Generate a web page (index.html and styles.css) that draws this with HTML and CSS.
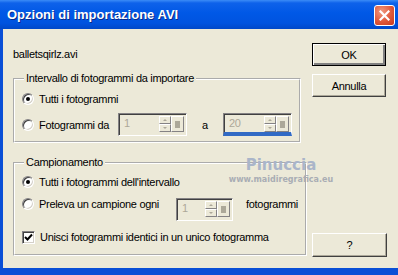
FILE: index.html
```html
<!DOCTYPE html>
<html lang="it">
<head>
<meta charset="utf-8" />
<title>Opzioni di importazione AVI</title>
<link rel="stylesheet" href="styles.css">
</head>
<body>
<div class="window">
	<div class="titlebar">
		<span class="title">Opzioni di importazione AVI</span>
		<span class="close">
			<svg width="11" height="11" viewBox="0 0 11 11"><path d="M1.5 1.5 L9.5 9.5 M9.5 1.5 L1.5 9.5" stroke="#fff" stroke-width="2.2" stroke-linecap="square"/></svg>
		</span>
	</div>
	<div class="client">
		<div class="main">
			<p class="file">balletsqirlz.avi</p>

			<fieldset class="group range">
				<legend>Intervallo di fotogrammi da importare</legend>
				<div class="row first"><span class="radio on"></span>Tutti i fotogrammi</div>
				<div class="row spinrow">
					<span class="radio"></span><span class="lbl from">Fotogrammi da</span>
					<span class="spin"><span class="val">1</span><span class="arrows"><i class="up"></i><i class="down"></i></span><span class="sq"><b></b></span></span>
					<span class="lbl to">a</span>
					<span class="spin focus"><span class="val">20</span><span class="arrows"><i class="up"></i><i class="down"></i></span><span class="sq"><b></b></span></span>
				</div>
			</fieldset>

			<fieldset class="group sample">
				<legend>Campionamento</legend>
				<div class="row first"><span class="radio on"></span>Tutti i fotogrammi dell'intervallo</div>
				<div class="row every">
					<span class="radio"></span><span class="lbl ogni">Preleva un campione ogni</span>
					<span class="spin small"><span class="val">1</span><span class="arrows"><i class="up"></i><i class="down"></i></span><span class="sq"><b></b></span></span>
					<span class="lbl unit">fotogrammi</span>
				</div>
				<div class="row check">
					<span class="box"><svg width="9" height="9" viewBox="0 0 9 9"><path d="M1 4 L3.5 6.5 L8 1.5" fill="none" stroke="#000" stroke-width="2"/></svg></span>
					Unisci fotogrammi identici in un unico fotogramma
				</div>
			</fieldset>
		</div>

		<div class="side">
			<span class="btn default">OK</span>
			<span class="btn">Annulla</span>
			<span class="btn help">?</span>
		</div>
	</div>

	<div class="mark">
		<span class="mark-name">Pinuccia</span>
		<span class="mark-url">www.maidiregrafica.eu</span>
	</div>
</div>
</body>
</html>
```

FILE: styles.css
```css
body {
	margin: 0;
	font: 11px "Liberation Sans", Arial, sans-serif;
	letter-spacing: -0.3px;
	color: #000;
}
.window {
	position: relative;
	width: 398px;
	height: 275px;
	overflow: hidden;
	display: flex;
	flex-direction: column;
	background: #0a4fd6;
}

/* --------------------------------- */

.titlebar {
	flex: none;
	height: 29px;
	display: flex;
	align-items: center;
	justify-content: space-between;
	padding: 0 3px 0 7px;
	background: linear-gradient(180deg, #3b8cf7 0, #0e62ea 3px, #0058e6 45%, #0053df 80%, #0048c8 100%);
}
.title {
	color: #fff;
	font: bold 13px "Liberation Sans", Arial, sans-serif;
	letter-spacing: 0;
	text-shadow: 1px 1px #0b2a8a;
}
.close {
	width: 19px;
	height: 19px;
	margin-top: 2px;
	display: flex;
	align-items: center;
	justify-content: center;
	border: 1px solid #fff;
	border-radius: 3px;
	background: radial-gradient(circle at 35% 30%, #f09a80 0, #e0583a 55%, #c8391c 100%);
}

/* --------------------------------- */

.client {
	flex: 1;
	margin: 0 0 7px 3px;
	background: #ece9d8;
	display: flex;
}
.main {
	padding: 19px 0 0 10px;
}
.file {
	margin: 0;
	line-height: 13px;
}

.group {
	margin: 0;
	padding: 0 7px;
	border: 2px groove #fff;
	box-sizing: border-box;
}
.group legend {
	padding: 0 2px;
	margin-left: 2px;
	line-height: 13px;
}
.range {
	width: 285px;
	margin-top: 11px;
	height: 71px;
}
.sample {
	width: 290px;
	margin-top: 13px;
	height: 100px;
}

.row {
	display: flex;
	align-items: center;
	height: 20px;
}
.range .first {
	margin-top: 4px;
}
.sample .first {
	margin-top: 3px;
}
.spinrow {
	height: 23px;
	margin-top: 4px;
}
.every {
	margin-top: 4px;
	height: 25px;
	align-items: flex-start;
}
.every .radio,
.every .lbl {
	margin-top: 2px;
}
.every .spin {
	margin-top: 2px;
}
.check {
	margin-top: 6px;
}

.lbl.from { width: 79px; }
.lbl.to { width: 36px; text-align: center; }
.lbl.ogni { width: 137px; }
.lbl.unit { margin-left: 13px; }

/* --------------------------------- */

.radio {
	flex: none;
	position: relative;
	width: 10px;
	height: 10px;
	margin-right: 5px;
	border: 1px solid;
	border-color: #848284 #fff #fff #848284;
	border-radius: 50%;
	background: #fff;
	box-shadow: inset 1px 1px #404040, inset -1px -1px #d4d0c8;
}
.radio.on::after {
	content: "";
	position: absolute;
	left: 3px;
	top: 3px;
	width: 4px;
	height: 4px;
	border-radius: 50%;
	background: #000;
}
.box {
	flex: none;
	width: 11px;
	height: 11px;
	margin-right: 5px;
	display: flex;
	align-items: center;
	justify-content: center;
	border: 1px solid;
	border-color: #848284 #fff #fff #848284;
	background: #fff;
	box-shadow: inset 1px 1px #404040, inset -1px -1px #d4d0c8;
}

/* --------------------------------- */

.spin {
	flex: none;
	box-sizing: border-box;
	width: 69px;
	height: 23px;
	display: flex;
	padding: 2px 2px 3px 3px;
	border: 1px solid;
	border-color: #848284 #fff #fff #848284;
	box-shadow: inset 1px 1px #404040;
	color: #aca899;
}
.spin.small {
	width: 57px;
}
.spin.focus {
	border-bottom: 4px solid #316ac5;
	padding-bottom: 0;
}
.val {
	flex: 1;
	line-height: 15px;
	padding-left: 2px;
}
.arrows {
	width: 12px;
	display: flex;
	flex-direction: column;
}
.arrows i {
	flex: 1;
	position: relative;
	border: 1px solid;
	border-color: #fff #848284 #848284 #fff;
	background: #ece9d8;
}
.arrows i::after {
	content: "";
	position: absolute;
	left: 3px;
	border: 2px solid transparent;
}
.arrows .up::after {
	top: 0;
	border-bottom-color: #aca899;
}
.arrows .down::after {
	top: 2px;
	border-top-color: #aca899;
}
.sq {
	width: 11px;
	display: flex;
	align-items: center;
	justify-content: center;
	border: 1px solid;
	border-color: #fff #848284 #848284 #fff;
	background: #ece9d8;
}
.sq b {
	width: 5px;
	height: 7px;
	background: #aca899;
}

/* --------------------------------- */

.side {
	margin-left: auto;
	padding: 14px 11px 11px 0;
	display: flex;
	flex-direction: column;
	gap: 8px;
}
.btn {
	box-sizing: border-box;
	width: 74px;
	height: 23px;
	display: flex;
	align-items: center;
	justify-content: center;
	border: 1px solid;
	border-color: #fff #404040 #404040 #fff;
	box-shadow: inset -1px -1px #aca899;
	background: #ece9d8;
}
.btn.default {
	border: 1px solid #000;
	box-shadow: inset 1px 1px #fff, inset -2px -2px #808080;
}
.btn.help {
	margin-top: auto;
	height: 24px;
	width: 75px;
}

/* --------------------------------- */

.mark {
	position: absolute;
	left: 226px;
	top: 157px;
	width: 110px;
	display: flex;
	flex-direction: column;
	align-items: center;
	color: #aab5c9;
	font-family: "DejaVu Sans", sans-serif;
	font-weight: bold;
	letter-spacing: 0;
}
.mark-name {
	font-size: 15px;
	line-height: 17px;
}
.mark-url {
	font-size: 8px;
	line-height: 11px;
	color: #a9adb4;
}
```
